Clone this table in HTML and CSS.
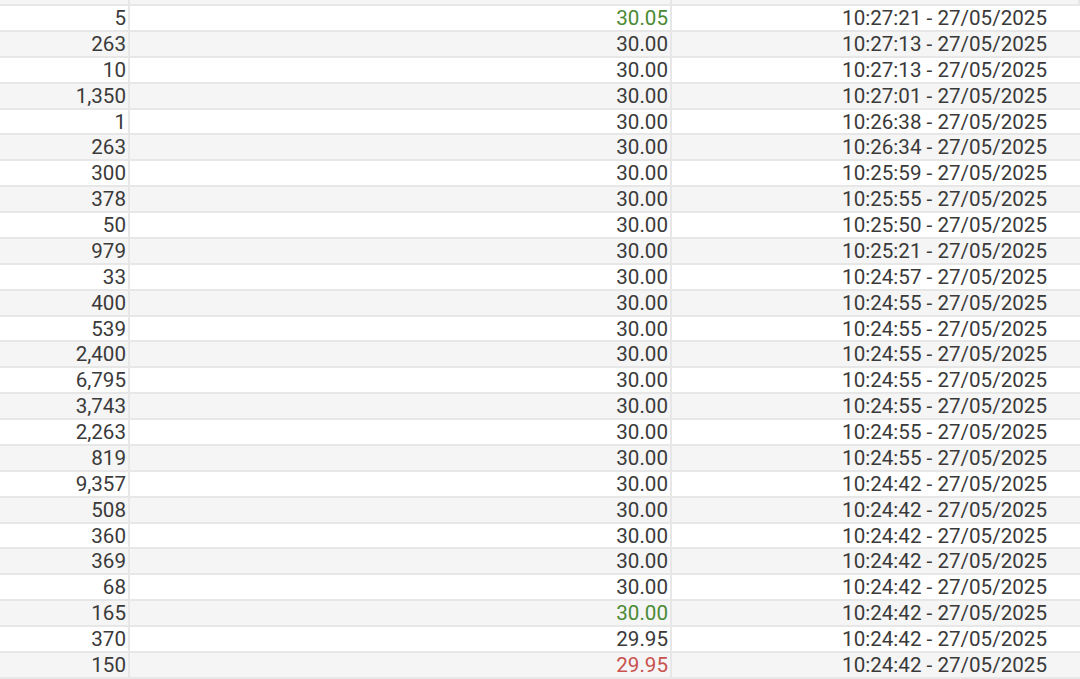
FILE: index.html
```html
<!DOCTYPE html>
<html lang="en">
<head>
  <meta charset="UTF-8">
  <meta name="viewport" content="width=device-width, initial-scale=1.0">
  <title>Trades</title>
  <link rel="stylesheet" href="styles.css">
</head>
<body>
  <main class="trades">
    <!-- cropped row at the top -->
    <div class="row row-cut"><span class="cell"></span><span class="cell"></span><span class="cell"></span></div>
    <div class="row"><span class="cell">5</span><span class="cell up">30.05</span><span class="cell time">10:27:21 - 27/05/2025</span></div>
    <div class="row"><span class="cell">263</span><span class="cell">30.00</span><span class="cell time">10:27:13 - 27/05/2025</span></div>
    <div class="row"><span class="cell">10</span><span class="cell">30.00</span><span class="cell time">10:27:13 - 27/05/2025</span></div>
    <div class="row"><span class="cell">1,350</span><span class="cell">30.00</span><span class="cell time">10:27:01 - 27/05/2025</span></div>
    <div class="row"><span class="cell">1</span><span class="cell">30.00</span><span class="cell time">10:26:38 - 27/05/2025</span></div>
    <div class="row"><span class="cell">263</span><span class="cell">30.00</span><span class="cell time">10:26:34 - 27/05/2025</span></div>
    <div class="row"><span class="cell">300</span><span class="cell">30.00</span><span class="cell time">10:25:59 - 27/05/2025</span></div>
    <div class="row"><span class="cell">378</span><span class="cell">30.00</span><span class="cell time">10:25:55 - 27/05/2025</span></div>
    <div class="row"><span class="cell">50</span><span class="cell">30.00</span><span class="cell time">10:25:50 - 27/05/2025</span></div>
    <div class="row"><span class="cell">979</span><span class="cell">30.00</span><span class="cell time">10:25:21 - 27/05/2025</span></div>
    <div class="row"><span class="cell">33</span><span class="cell">30.00</span><span class="cell time">10:24:57 - 27/05/2025</span></div>
    <div class="row"><span class="cell">400</span><span class="cell">30.00</span><span class="cell time">10:24:55 - 27/05/2025</span></div>
    <div class="row"><span class="cell">539</span><span class="cell">30.00</span><span class="cell time">10:24:55 - 27/05/2025</span></div>
    <div class="row"><span class="cell">2,400</span><span class="cell">30.00</span><span class="cell time">10:24:55 - 27/05/2025</span></div>
    <div class="row"><span class="cell">6,795</span><span class="cell">30.00</span><span class="cell time">10:24:55 - 27/05/2025</span></div>
    <div class="row"><span class="cell">3,743</span><span class="cell">30.00</span><span class="cell time">10:24:55 - 27/05/2025</span></div>
    <div class="row"><span class="cell">2,263</span><span class="cell">30.00</span><span class="cell time">10:24:55 - 27/05/2025</span></div>
    <div class="row"><span class="cell">819</span><span class="cell">30.00</span><span class="cell time">10:24:55 - 27/05/2025</span></div>
    <div class="row"><span class="cell">9,357</span><span class="cell">30.00</span><span class="cell time">10:24:42 - 27/05/2025</span></div>
    <div class="row"><span class="cell">508</span><span class="cell">30.00</span><span class="cell time">10:24:42 - 27/05/2025</span></div>
    <div class="row"><span class="cell">360</span><span class="cell">30.00</span><span class="cell time">10:24:42 - 27/05/2025</span></div>
    <div class="row"><span class="cell">369</span><span class="cell">30.00</span><span class="cell time">10:24:42 - 27/05/2025</span></div>
    <div class="row"><span class="cell">68</span><span class="cell">30.00</span><span class="cell time">10:24:42 - 27/05/2025</span></div>
    <div class="row"><span class="cell">165</span><span class="cell up">30.00</span><span class="cell time">10:24:42 - 27/05/2025</span></div>
    <div class="row"><span class="cell">370</span><span class="cell">29.95</span><span class="cell time">10:24:42 - 27/05/2025</span></div>
    <div class="row"><span class="cell">150</span><span class="cell down">29.95</span><span class="cell time">10:24:42 - 27/05/2025</span></div>
  </main>
</body>
</html>
```

FILE: styles.css
```css
/* Base styles */
body {
  margin: 0;
  padding: 0;
  background-color: #fff;
  font-family: Roboto, "Liberation Sans", sans-serif;
  color: #3a3a3a;
}
.trades {
  width: 100%;
}
/* Rows alternate white / light grey, first visible row is white */
.row {
  display: grid;
  grid-template-columns: 130px 542px 1fr;
  height: 25.88px;
  box-sizing: border-box;
  border-bottom: 2px solid #e7e7e7;
  background-color: #fff;
}
.row:nth-child(odd) {
  background-color: #f5f5f5;
}
.row-cut {
  height: 6px;
}
.cell {
  box-sizing: border-box;
  padding-right: 2px;
  text-align: right;
  font-size: 20.6px;
  line-height: 24px;
  white-space: nowrap;
  border-right: 2px solid #e7e7e7;
}
.cell.time {
  padding-right: 33px;
  border-right: none;
}
.up {
  color: #4b8a35;
}
.down {
  color: #c9524f;
}
```
